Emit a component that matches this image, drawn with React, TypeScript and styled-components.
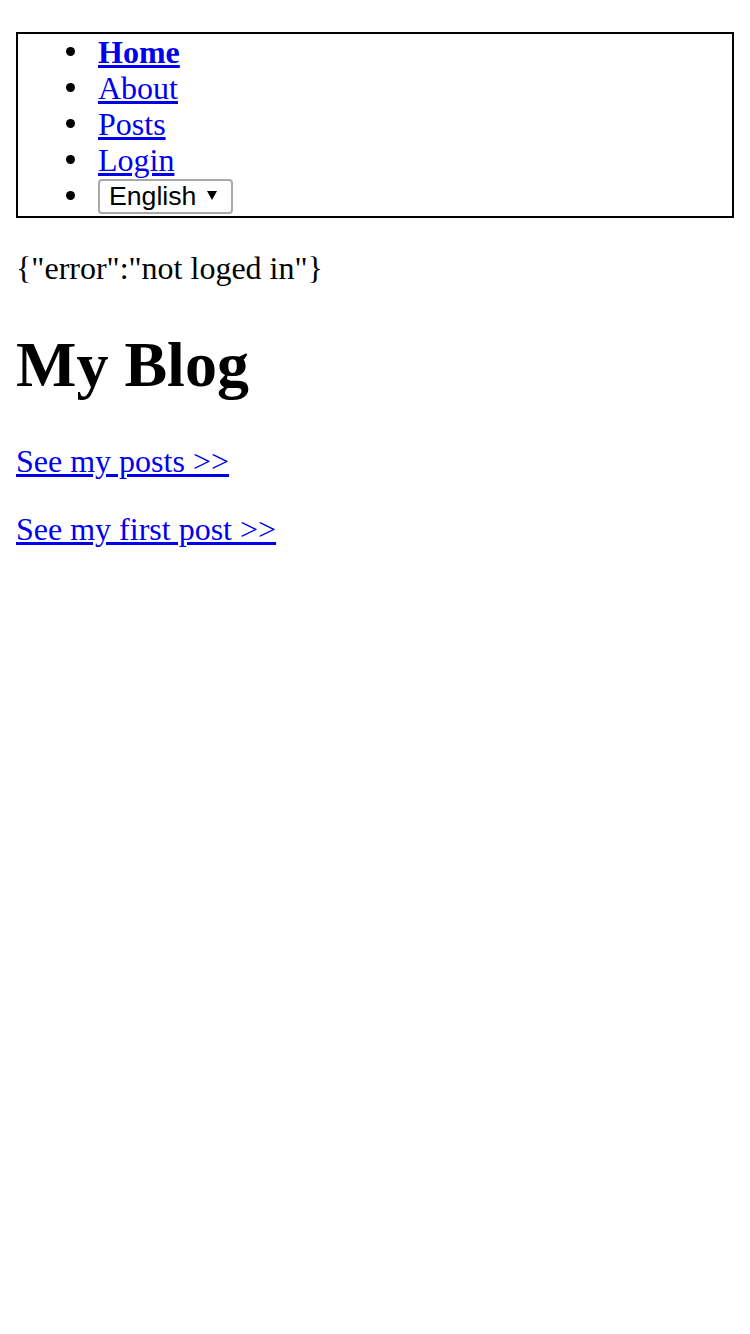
import React from "react";
import styled, { createGlobalStyle } from "styled-components";

const GlobalStyle = createGlobalStyle`
  html, body { margin: 0; padding: 0; background: #fff; }
  body {
    font-family: "Liberation Serif", "Times New Roman", serif;
    font-size: 32px;
    line-height: 36px;
    color: #000;
  }
`;

const Page = styled.div`
  padding: 32px 16px;
`;

const NavList = styled.ul`
  margin: 0;
  padding: 0 0 0 80px;
  border: 2px solid #000;
  list-style: none;
`;

const NavItem = styled.li`
  position: relative;
  line-height: 36px;

  &::before {
    content: "";
    position: absolute;
    left: -32px;
    top: 13px;
    width: 9px;
    height: 9px;
    border-radius: 50%;
    background: #000;
  }
`;

const NavLink = styled.a<{ $active?: boolean }>`
  color: #0000ee;
  text-decoration: underline;
  font-weight: ${(p) => (p.$active ? 700 : 400)};
`;

const SelectWrap = styled.span`
  position: relative;
  display: inline-block;
  vertical-align: top;
  margin: 1px 0 2px;
`;

const LangSelect = styled.select`
  appearance: none;
  -webkit-appearance: none;
  display: block;
  font-family: "Liberation Sans", Arial, sans-serif;
  font-size: 26.67px;
  color: #000;
  background: #fff;
  border: 2px solid #a9a9a9;
  border-radius: 4px;
  height: 35px;
  width: 135px;
  padding: 0 28px 0 9px;
  margin: 0;
  box-sizing: border-box;
  line-height: 31px;
`;

const Arrow = styled.svg`
  position: absolute;
  right: 16px;
  top: 12px;
  pointer-events: none;
`;

const Paragraph = styled.p`
  margin: 32px 0;
`;

const Title = styled.h1`
  font-size: 64px;
  line-height: 71px;
  font-weight: 700;
  margin: 43px 0;
`;

const BodyLink = styled.a`
  color: #0000ee;
  text-decoration: underline;
`;

export default function App() {
  return (
    <>
      <GlobalStyle />
      <Page>
        <nav>
          <NavList>
            <NavItem>
              <NavLink href="#" $active>
                Home
              </NavLink>
            </NavItem>
            <NavItem>
              <NavLink href="#">About</NavLink>
            </NavItem>
            <NavItem>
              <NavLink href="#">Posts</NavLink>
            </NavItem>
            <NavItem>
              <NavLink href="#">Login</NavLink>
            </NavItem>
            <NavItem>
              <SelectWrap>
                <LangSelect defaultValue="en">
                  <option value="en">English</option>
                </LangSelect>
                <Arrow width="10" height="9" viewBox="0 0 10 9">
                  <path d="M0 0 H10 L5 9 Z" fill="#000" />
                </Arrow>
              </SelectWrap>
            </NavItem>
          </NavList>
        </nav>
        <Paragraph>{'{"error":"not loged in"}'}</Paragraph>
        <Title>My Blog</Title>
        <Paragraph>
          <BodyLink href="#">See my posts &gt;&gt;</BodyLink>
        </Paragraph>
        <Paragraph>
          <BodyLink href="#">See my first post &gt;&gt;</BodyLink>
        </Paragraph>
      </Page>
    </>
  );
}
